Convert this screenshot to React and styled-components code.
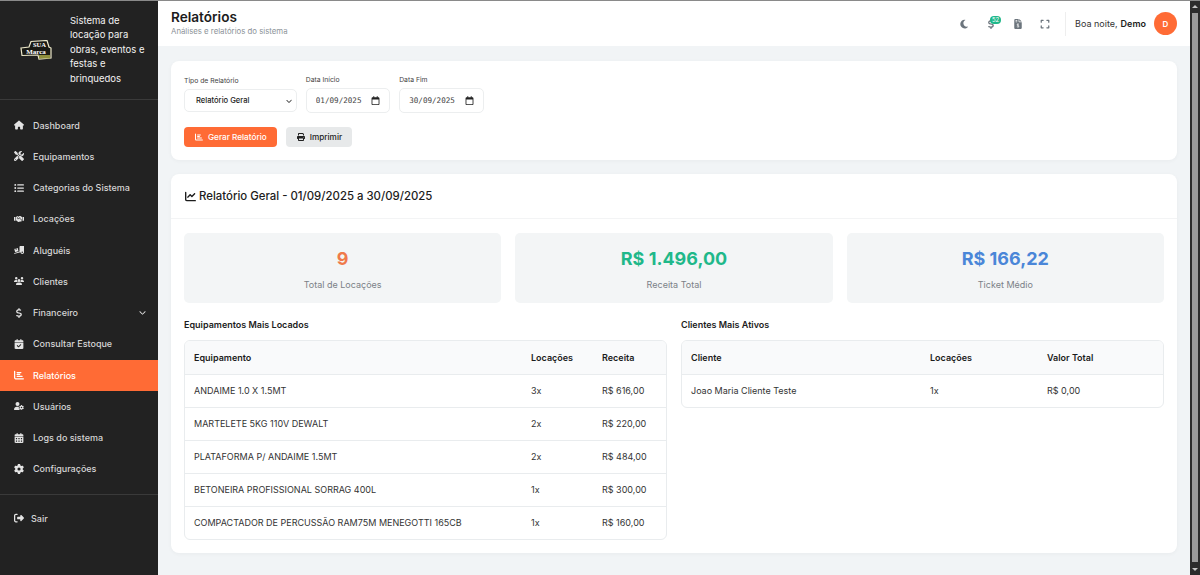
import React from 'react';
import styled, { createGlobalStyle } from 'styled-components';
import {
  FaHouse, FaScrewdriverWrench, FaListUl, FaHandshake, FaTruckRampBox, FaUsers, FaDollarSign,
  FaCalendarCheck, FaChartBar, FaUserGear, FaCalendarDays, FaGear, FaRightFromBracket,
  FaMoon, FaFileInvoiceDollar, FaExpand, FaPrint, FaChartLine, FaChevronDown, FaRegCalendar,
} from 'react-icons/fa6';

const GlobalStyle = createGlobalStyle`
  html, body { margin: 0; padding: 0; height: 100%; overflow: hidden; }
  body { font-family: Inter, "Liberation Sans", sans-serif; background: #f1f4f6; color: #212529; }
  * { box-sizing: border-box; }
`;

const Shell = styled.div`
  display: flex;
  height: 575px;
  width: 1200px;
  border-top: 1px solid #8a8a8a;
`;

const Sidebar = styled.aside`
  width: 158px;
  flex: none;
  background: #222222;
  display: flex;
  flex-direction: column;
`;

const Brand = styled.div`
  height: 99px;
  flex: none;
  display: flex;
  align-items: center;
  gap: 18px;
  padding: 0 8px 0 20px;
  border-bottom: 1px solid #3a3a3a;
`;

const BrandText = styled.p`
  margin: 0;
  color: #f2f2f2;
  font-size: 9.5px;
  line-height: 14.4px;
  width: 76px;
`;

const Nav = styled.nav`
  display: flex;
  flex-direction: column;
  padding: 9.5px 0;
  border-bottom: 1px solid #3a3a3a;
`;

const NavItem = styled.a`
  height: 31.25px;
  flex: none;
  display: flex;
  align-items: center;
  gap: 9px;
  padding: 0 12px 0 14px;
  font-size: 9px;
  font-weight: 500;
  color: ${p => (p.$active ? '#ffffff' : '#d6d6d6')};
  background: ${p => (p.$active ? '#ff6b35' : 'transparent')};
  svg { width: 10px; height: 10px; flex: none; color: ${p => (p.$active ? '#ffffff' : '#e4e4e4')}; }
`;

const Chevron = styled(FaChevronDown)`
  margin-left: auto;
  && { width: 7px; height: 7px; }
`;

const Logout = styled(NavItem)`
  margin-top: 7.5px;
  gap: 7px;
`;

const Main = styled.main`
  flex: 1;
  min-width: 0;
  display: flex;
  flex-direction: column;
  overflow: hidden;
`;

const ScrollRail = styled.div`
  width: 10px;
  flex: none;
  background: #2c2c2c;
  display: flex;
  flex-direction: column;
  align-items: center;
  justify-content: space-between;
  padding: 4px 0;
`;

const ScrollArrow = styled.span`
  flex: none;
  width: 0;
  height: 0;
  border-left: 3px solid transparent;
  border-right: 3px solid transparent;
  border-${p => (p.$down ? 'top' : 'bottom')}: 3px solid #c4c4c4;
`;

const ScrollThumb = styled.span`
  flex: 1;
  width: 6px;
  margin: 5px 0 6px;
  background: #9b9b9b;
`;

const Topbar = styled.header`
  height: 45px;
  flex: none;
  background: #ffffff;
  display: flex;
  align-items: center;
  justify-content: space-between;
  padding: 0 13px;
`;

const TitleBlock = styled.div`
  padding-bottom: 1px;
`;

const PageTitle = styled.h1`
  margin: 0;
  font-size: 13.6px;
  line-height: 15px;
  font-weight: 600;
  color: #1c1c1c;
`;

const PageSub = styled.div`
  font-size: 7.8px;
  line-height: 10px;
  margin-top: 1.5px;
  color: #8d9399;
`;

const TopActions = styled.div`
  display: flex;
  align-items: center;
`;

const TopIcon = styled.span`
  position: relative;
  width: 27px;
  display: flex;
  justify-content: center;
  color: #6c757d;
  svg { width: 10px; height: 10px; }
`;

const Badge = styled.span`
  position: absolute;
  top: -3px;
  left: 12.5px;
  height: 8px;
  min-width: 11px;
  border-radius: 6px;
  background: #1fb88a;
  color: #fff;
  font-size: 6px;
  line-height: 8px;
  text-align: center;
`;

const Greeting = styled.div`
  margin-left: 6.5px;
  padding-left: 9px;
  border-left: 1px solid #eeeeee;
  height: 24px;
  display: flex;
  align-items: center;
  font-size: 9px;
  color: #333;
  b { margin-left: 3px; font-weight: 600; color: #1c1c1c; }
`;

const Avatar = styled.span`
  margin-left: 8px;
  width: 23px;
  height: 23px;
  border-radius: 50%;
  background: #ff6b35;
  color: #fff;
  font-size: 8px;
  font-weight: 600;
  display: flex;
  align-items: center;
  justify-content: center;
`;

const Content = styled.div`
  flex: none;
  padding: 15px 13px 28px;
  display: flex;
  flex-direction: column;
  gap: 14px;
`;

const Card = styled.section`
  background: #fff;
  border-radius: 8px;
  box-shadow: 0 1px 4px rgba(0, 0, 0, 0.04);
`;

const FilterCard = styled(Card)`
  height: 99px;
  padding: 14px 13px 0;
`;

const FilterRow = styled.div`
  display: flex;
  align-items: flex-end;
  gap: 8.8px;
`;

const Field = styled.label`
  display: flex;
  flex-direction: column;
  gap: 4px;
  font-size: 6.8px;
  color: #444;
`;

const SelectBox = styled.div`
  width: 113px;
  height: 23px;
  margin-bottom: 1px;
  border: 1px solid #eceeef;
  border-radius: 5px;
  background: #fff;
  padding: 0 4px 0 11px;
  display: flex;
  align-items: center;
  svg { width: 6px; height: 6px; flex: none; color: #222; }
`;

const Select = styled.select`
  flex: 1;
  min-width: 0;
  appearance: none;
  border: 0;
  outline: 0;
  padding: 0;
  background: transparent;
  font: 500 7.6px Inter, sans-serif;
  color: #222;
`;

const DateBox = styled.div`
  width: 84.6px;
  height: 25px;
  border: 1px solid #eceeef;
  border-radius: 5px;
  background: #fff;
  padding: 0 9px 0 9px;
  display: flex;
  align-items: center;
  svg { width: 9px; height: 9px; flex: none; color: #222; }
`;

const DateInput = styled.input`
  flex: 1;
  min-width: 0;
  border: 0;
  padding: 0;
  outline: 0;
  background: transparent;
  font: 7.6px "DejaVu Sans Mono", monospace;
  color: #444;
`;

const Buttons = styled.div`
  display: flex;
  gap: 9px;
  margin-top: 14px;
`;

const Button = styled.button`
  height: 20px;
  border: 0;
  border-radius: 4px;
  padding: 0 10px 0 11px;
  display: flex;
  align-items: center;
  gap: 5px;
  font: 500 8.2px Inter, sans-serif;
  background: ${p => (p.$primary ? '#ff6b35' : '#e7e9ea')};
  color: ${p => (p.$primary ? '#fff' : '#222')};
  svg { width: 8px; height: 8px; flex: none; }
`;

const ReportCard = styled(Card)`
  height: 379px;
`;

const ReportHeader = styled.h2`
  margin: 0;
  height: 45px;
  padding: 0 14px;
  display: flex;
  align-items: center;
  gap: 3px;
  border-bottom: 1px solid #f3f4f5;
  font-size: 11.4px;
  font-weight: 500;
  color: #1c1c1c;
  svg { width: 11px; height: 11px; flex: none; }
`;

const ReportBody = styled.div`
  padding: 14px 13px;
`;

const Stats = styled.div`
  display: grid;
  grid-template-columns: repeat(3, 1fr);
  gap: 14px;
`;

const Stat = styled.div`
  height: 70px;
  background: #f3f5f6;
  border-radius: 5px;
  display: flex;
  flex-direction: column;
  align-items: center;
  padding-top: 14px;
`;

const StatValue = styled.div`
  font-size: 18px;
  line-height: 23px;
  font-weight: 700;
  color: ${p => p.$color};
`;

const StatLabel = styled.div`
  margin-top: 9px;
  font-size: 9px;
  line-height: 11px;
  color: #7b8187;
`;

const Tables = styled.div`
  display: grid;
  grid-template-columns: 1fr 1fr;
  gap: 14px;
  margin-top: 16px;
`;

const SectionTitle = styled.h3`
  margin: 0 0 10px;
  font-size: 9px;
  line-height: 11px;
  font-weight: 600;
  color: #1c1c1c;
`;

const TableWrap = styled.div`
  border: 1px solid #e9ecee;
  border-radius: 6px;
  overflow: hidden;
`;

const Table = styled.table`
  width: 100%;
  border-collapse: collapse;
  table-layout: fixed;
  font-size: 9px;
  color: #333;
`;

const Th = styled.th`
  height: 33px;
  padding: 0 9px;
  text-align: left;
  font-weight: 600;
  color: #1c1c1c;
  background: #f9fafb;
  width: ${p => p.$w || 'auto'};
`;

const Td = styled.td`
  height: 33px;
  padding: 0 9px;
  border-top: 1px solid #e9ecee;
`;

const equipamentos = [
  ['ANDAIME 1.0 X 1.5MT', '3x', 'R$ 616,00'],
  ['MARTELETE 5KG 110V DEWALT', '2x', 'R$ 220,00'],
  ['PLATAFORMA P/ ANDAIME 1.5MT', '2x', 'R$ 484,00'],
  ['BETONEIRA PROFISSIONAL SORRAG 400L', '1x', 'R$ 300,00'],
  ['COMPACTADOR DE PERCUSSÃO RAM75M MENEGOTTI 165CB', '1x', 'R$ 160,00'],
];

const menu = [
  [FaHouse, 'Dashboard'],
  [FaScrewdriverWrench, 'Equipamentos'],
  [FaListUl, 'Categorias do Sistema'],
  [FaHandshake, 'Locações'],
  [FaTruckRampBox, 'Aluguéis'],
  [FaUsers, 'Clientes'],
  [FaDollarSign, 'Financeiro', true],
  [FaCalendarCheck, 'Consultar Estoque'],
  [FaChartBar, 'Relatórios', false, true],
  [FaUserGear, 'Usuários'],
  [FaCalendarDays, 'Logs do sistema'],
  [FaGear, 'Configurações'],
];

function Logo() {
  return (
    <svg width="32" height="20" viewBox="0 0 32 20" style={{ flex: 'none' }}>
      <path d="M1 8 L9 7 L11 1.5 L27 0.5 L29 7 L31 8 L31 18 L19 19 L18 15 L2 15.5 Z" fill="#1a1a14" stroke="#eeeacb" strokeWidth="1.2" />
      <rect x="19" y="15" width="11" height="3.5" fill="#8f8f3c" />
      <text x="19.5" y="7.2" fontSize="6.6" fontWeight="700" fontFamily="Liberation Serif, serif" fill="#fff" textAnchor="middle">SUA</text>
      <text x="16" y="13.6" fontSize="7" fontWeight="700" fontFamily="Liberation Serif, serif" fill="#fff" textAnchor="middle">Marca</text>
    </svg>
  );
}

export default function App() {
  return (
    <>
      <GlobalStyle />
      <Shell>
        <Sidebar>
          <Brand>
            <Logo />
            <BrandText>Sistema de locação para obras, eventos e festas e brinquedos</BrandText>
          </Brand>
          <Nav>
            {menu.map(([Icon, label, sub, active]) => (
              <NavItem key={label} $active={active}>
                <Icon />
                {label}
                {sub && <Chevron />}
              </NavItem>
            ))}
          </Nav>
          <Logout><FaRightFromBracket />Sair</Logout>
        </Sidebar>
        <Main>
          <Topbar>
            <TitleBlock>
              <PageTitle>Relatórios</PageTitle>
              <PageSub>Análises e relatórios do sistema</PageSub>
            </TitleBlock>
            <TopActions>
              <TopIcon><FaMoon /></TopIcon>
              <TopIcon><FaDollarSign /><Badge>52</Badge></TopIcon>
              <TopIcon><FaFileInvoiceDollar /></TopIcon>
              <TopIcon><FaExpand /></TopIcon>
              <Greeting>Boa noite, <b>Demo</b></Greeting>
              <Avatar>D</Avatar>
            </TopActions>
          </Topbar>
          <Content>
            <FilterCard>
              <FilterRow>
                <Field>
                  Tipo de Relatório
                  <SelectBox>
                    <Select defaultValue="geral"><option value="geral">Relatório Geral</option></Select>
                    <FaChevronDown />
                  </SelectBox>
                </Field>
                <Field>
                  Data Início
                  <DateBox><DateInput defaultValue="01/09/2025" /><FaRegCalendar /></DateBox>
                </Field>
                <Field>
                  Data Fim
                  <DateBox><DateInput defaultValue="30/09/2025" /><FaRegCalendar /></DateBox>
                </Field>
              </FilterRow>
              <Buttons>
                <Button $primary><FaChartBar />Gerar Relatório</Button>
                <Button><FaPrint />Imprimir</Button>
              </Buttons>
            </FilterCard>
            <ReportCard>
              <ReportHeader><FaChartLine />Relatório Geral - 01/09/2025 a 30/09/2025</ReportHeader>
              <ReportBody>
                <Stats>
                  <Stat><StatValue $color="#ef7a4a">9</StatValue><StatLabel>Total de Locações</StatLabel></Stat>
                  <Stat><StatValue $color="#1fb88a">R$ 1.496,00</StatValue><StatLabel>Receita Total</StatLabel></Stat>
                  <Stat><StatValue $color="#4a86d8">R$ 166,22</StatValue><StatLabel>Ticket Médio</StatLabel></Stat>
                </Stats>
                <Tables>
                  <div>
                    <SectionTitle>Equipamentos Mais Locados</SectionTitle>
                    <TableWrap>
                      <Table>
                        <thead><tr><Th>Equipamento</Th><Th $w="71px">Locações</Th><Th $w="73px">Receita</Th></tr></thead>
                        <tbody>
                          {equipamentos.map(r => (
                            <tr key={r[0]}><Td>{r[0]}</Td><Td>{r[1]}</Td><Td>{r[2]}</Td></tr>
                          ))}
                        </tbody>
                      </Table>
                    </TableWrap>
                  </div>
                  <div>
                    <SectionTitle>Clientes Mais Ativos</SectionTitle>
                    <TableWrap>
                      <Table>
                        <thead><tr><Th>Cliente</Th><Th $w="117px">Locações</Th><Th $w="125px">Valor Total</Th></tr></thead>
                        <tbody>
                          <tr><Td>Joao Maria Cliente Teste</Td><Td>1x</Td><Td>R$ 0,00</Td></tr>
                        </tbody>
                      </Table>
                    </TableWrap>
                  </div>
                </Tables>
              </ReportBody>
            </ReportCard>
          </Content>
        </Main>
        <ScrollRail>
          <ScrollArrow />
          <ScrollThumb />
          <ScrollArrow $down />
        </ScrollRail>
      </Shell>
    </>
  );
}
